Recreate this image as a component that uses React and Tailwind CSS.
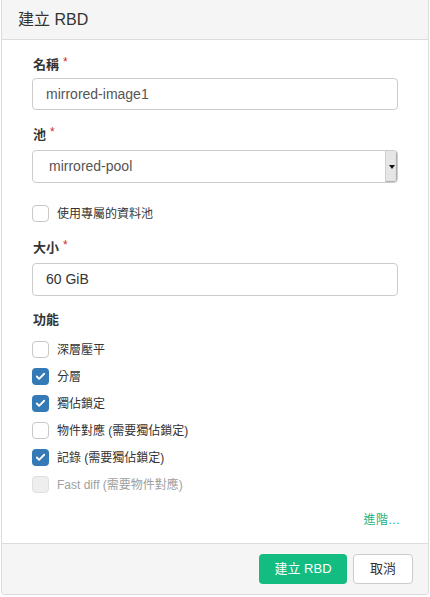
import { Check } from 'lucide-react'

const FONT = { fontFamily: '"Liberation Sans", "Noto Sans CJK TC", Arial, sans-serif' }

function Label({ children, required }) {
  return (
    <div className="text-[13px] font-bold text-[#333] leading-[18px] pl-px">
      {children}
      {required && <span className="text-[#c9302c] font-normal ml-1 align-top text-[12px] leading-[12px]">*</span>}
    </div>
  )
}

function Box({ state }) {
  if (state === 'checked') {
    return (
      <span className="w-[17px] h-[17px] rounded-[4px] bg-[#337ab7] flex items-center justify-center shrink-0">
        <Check size={11} strokeWidth={4} className="text-white" />
      </span>
    )
  }
  if (state === 'disabled') {
    return <span className="w-[17px] h-[17px] rounded-[4px] bg-[#eeeeee] border border-[#e0e0e0] shrink-0" />
  }
  return <span className="w-[17px] h-[17px] rounded-[4px] bg-white border border-[#c8c8c8] shrink-0" />
}

function CheckRow({ state, children }) {
  return (
    <div className="flex items-center h-[27px]">
      <Box state={state} />
      <span className={`ml-[8px] text-[12px] ${state === 'disabled' ? 'text-[#a0a0a0]' : 'text-[#333]'}`}>{children}</span>
    </div>
  )
}

const FEATURES = [
  ['unchecked', '深層壓平'],
  ['checked', '分層'],
  ['checked', '獨佔鎖定'],
  ['unchecked', '物件對應 (需要獨佔鎖定)'],
  ['checked', '記錄 (需要獨佔鎖定)'],
  ['disabled', 'Fast diff (需要物件對應)'],
]

export default function App() {
  return (
    <div style={FONT} className="w-[430px] h-[597px] bg-white pl-px pr-[1px]">
      <div className="w-[428px] h-[595px] border border-t-0 border-[#dcdcdc] rounded-b-[4px] flex flex-col overflow-hidden">
        {/* Header */}
        <div className="h-10 bg-[#f5f5f5] border-b border-[#dcdcdc] flex items-center pl-[16px] shrink-0">
          <span className="text-[16px] text-[#333]">建立 RBD</span>
        </div>

        {/* Body */}
        <div className="flex-1 px-[30px] pt-[16px]">
          <Label required>名稱</Label>
          <div className="mt-[4px] h-8 border border-[#cccccc] rounded-[4px] flex items-center px-[13px] text-[14px] text-[#555]">
            mirrored-image1
          </div>

          <div className="mt-[16px]">
            <Label required>池</Label>
          </div>
          <div className="mt-[6px] h-[33px] border border-[#cccccc] rounded-[4px] flex items-center text-[14px] text-[#555] overflow-hidden">
            <span className="flex-1 pl-[16px]">mirrored-pool</span>
            <span className="w-[12px] h-full bg-[#e6e6e6] border-l border-[#d0d0d0] shadow-[inset_-1px_-1px_1px_rgba(0,0,0,0.25)] flex items-center justify-center">
              <span className="w-0 h-0 border-l-[3px] border-r-[3px] border-t-[4px] border-l-transparent border-r-transparent border-t-[#111]" />
            </span>
          </div>

          <div className="mt-[17px] flex items-center h-[27px]">
            <Box state="unchecked" />
            <span className="ml-[8px] text-[12px] text-[#333]">使用專屬的資料池</span>
          </div>

          <div className="mt-[12px]">
            <Label required>大小</Label>
          </div>
          <div className="mt-[6px] h-[33px] border border-[#cccccc] rounded-[4px] flex items-center px-[13px] text-[14px] text-[#333]">
            60 GiB
          </div>

          <div className="mt-[15px]">
            <Label>功能</Label>
          </div>
          <div className="mt-[7px]">
            {FEATURES.map(([s, t]) => (
              <CheckRow key={t} state={s}>{t}</CheckRow>
            ))}
          </div>

          <div className="mt-[13px] flex justify-end">
            <span className="text-[12px] text-[#1bb37e] tracking-[0.5px] mr-[-2px]">進階...</span>
          </div>
        </div>

        {/* Footer */}
        <div className="h-[51px] bg-[#f5f5f5] border-t border-[#dcdcdc] flex items-center justify-end gap-[6px] pr-[15px] shrink-0">
          <button className="h-[30px] w-[88px] rounded-[4px] bg-[#13bd82] text-white text-[13px]">建立 RBD</button>
          <button className="h-[30px] w-[60px] rounded-[4px] bg-white border border-[#cccccc] text-[#333] text-[13px]">取消</button>
        </div>
      </div>
    </div>
  )
}
